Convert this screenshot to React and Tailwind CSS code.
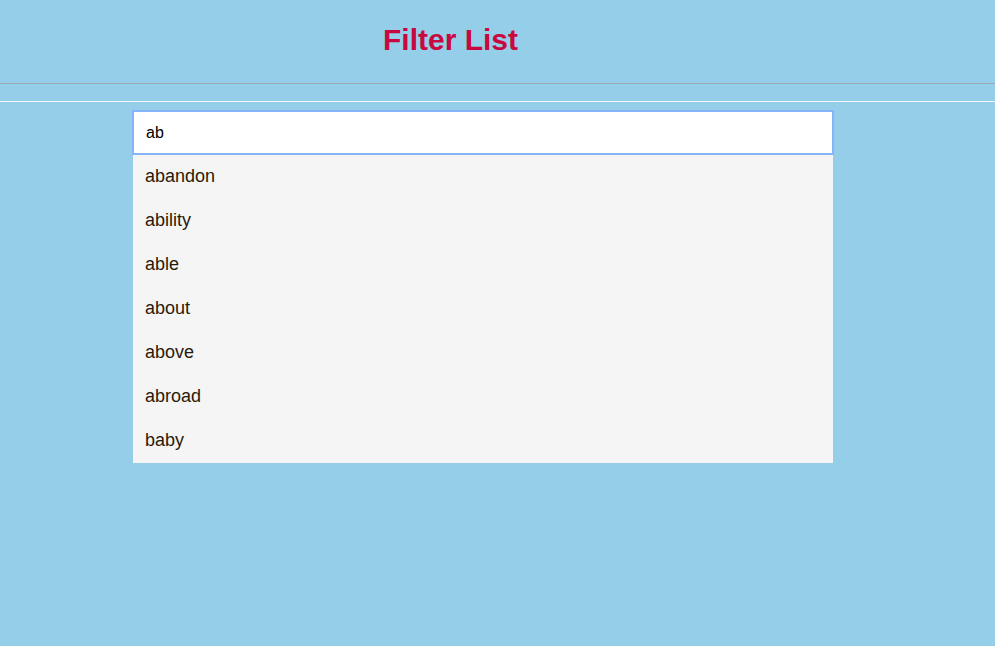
import React, { useState } from 'react';

const words = ['abandon', 'ability', 'able', 'about', 'above', 'abroad', 'baby'];

export default function App() {
    const [query, setQuery] = useState('ab');

    return (
        <div className="min-h-screen bg-[#94cee8] font-['Liberation_Sans',Arial,sans-serif]">
            {/* Header */}
            <div className="h-[84px] border-b border-[#9aa9b2] flex justify-center pr-[94px]">
                <h1 className="mt-[21px] text-[30px] leading-[38px] font-bold text-[#c80840]">Filter List</h1>
            </div>

            <div className="mt-[17px] border-t border-[#f4f8fa]" />

            {/* Search + results */}
            <div className="w-[702px] ml-[132px] mt-[8px]">
                <input
                    value={query}
                    onChange={(e) => setQuery(e.target.value)}
                    autoFocus
                    className="block w-full h-[45px] px-[12px] bg-white border-2 border-[#86b4f8] outline-none text-[16px] text-black"
                />
                <ul className="mx-[1px]">
                    {words.map((w) => (
                        <li key={w} className="h-[44px] flex items-center pb-[2px] px-[12px] bg-[#f5f5f5] text-[18px] text-[#2a1a08]">
                            {w}
                        </li>
                    ))}
                </ul>
            </div>
        </div>
    );
}
